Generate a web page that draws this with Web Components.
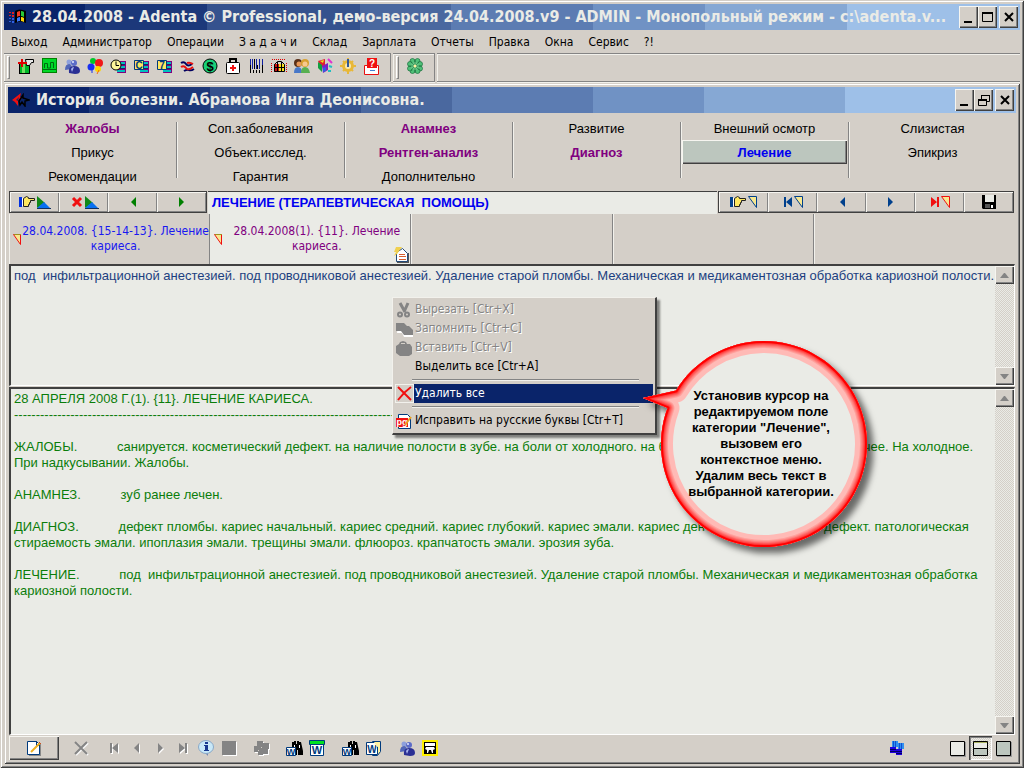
<!DOCTYPE html>
<html lang="ru">
<head>
<meta charset="utf-8">
<meta name="viewport" content="width=device-width, initial-scale=1">
<title>Adenta Professional</title>
<style>
  :root {
    --face: #d4cfc8;
    --light: #f2f1ec;
    --shade: #848484;
    --dark: #404040;
    --field: #eaebe6;
    --ui: "DejaVu Sans Condensed", "Noto Sans", sans-serif;
    --text: "Liberation Sans", Arial, sans-serif;
  }
  html, body { margin: 0; height: 100%; background: var(--face); }
  body { font: 12px/16px var(--ui); color: #000; }
</style>
</head>
<body>

<app-window class="main" caption="28.04.2008 - Adenta © Professional, демо-версия 24.04.2008.v9 - ADMIN - Монопольный режим - c:\adenta.v..." icon="winflag" middle="max">
  <menu-bar items="Выход|Администратор|Операции|З а д а ч и|Склад|Зарплата|Отчеты|Правка|Окна|Сервис|?!"></menu-bar>
  <tool-bar></tool-bar>
  <app-window class="child" caption="История болезни. Абрамова Инга Деонисовна." icon="arrows" middle="restore">
    <category-grid></category-grid>
    <record-nav>ЛЕЧЕНИЕ (ТЕРАПЕВТИЧЕСКАЯ&nbsp; ПОМОЩЬ)</record-nav>
    <visit-tabs></visit-tabs>
    <memo-field class="editor"><textarea aria-label="Лечение" spellcheck="false">под  инфильтрационной анестезией. под проводниковой анестезией. Удаление старой пломбы. Механическая и медикаментозная обработка кариозной полости.</textarea></memo-field>
    <memo-field class="report"><textarea aria-label="История болезни" spellcheck="false" readonly>28 АПРЕЛЯ 2008 Г.(1). {11}. ЛЕЧЕНИЕ КАРИЕСА.
------------------------------------------------------------------------------------------------------------------------

ЖАЛОБЫ.           санируется. косметический дефект. на наличие полости в зубе. на боли от холодного. на боли от сладкого. кислое. На горячее. На холодное. При надкусывании. Жалобы.

АНАМНЕЗ.           зуб ранее лечен.

ДИАГНОЗ.           дефект пломбы. кариес начальный. кариес средний. кариес глубокий. кариес эмали. кариес дентина. клиновидный дефект. патологическая стираемость эмали. ипоплазия эмали. трещины эмали. флюороз. крапчатость эмали. эрозия зуба.

ЛЕЧЕНИЕ.           под  инфильтрационной анестезией. под проводниковой анестезией. Удаление старой пломбы. Механическая и медикаментозная обработка кариозной полости.</textarea></memo-field>
    <bottom-bar></bottom-bar>
  </app-window>
</app-window>

<context-menu></context-menu>
<hint-callout>Установив курсор на<br>редактируемом поле<br>категории "Лечение",<br>вызовем его<br>контекстное меню.<br>Удалим весь текст в<br>выбранной категории.</hint-callout>

<script>
/**
 * Icons: [width, height, svg body]
 */
const HAND = (x, cuff) => `<path fill="${cuff}" d="M${x} 3h3v10h-3z"/><path fill="#fff" d="M${x + 3} 4h1v8h-1z"/>
  <path fill="#ffe860" stroke="#222" d="M${x + 4}.5 4.500l3-2 2 1v1h6v2h-4v2h-1v2h-1v2h-5z"/>`;
const PEOPLE = `<circle cx="5" cy="4" r="2.500" fill="#8ea0dc"/><path fill="#5266b8" d="M1 12q0-6 4-6 3 0 3 5z"/>
  <circle cx="10" cy="5" r="3" fill="#5c6cc8"/><circle cx="9" cy="4" r="1" fill="#e4e9ff"/><path fill="#2a2f94" d="M5 15q-1-7 5-7 6 0 6 5 0 3-5 3z"/><path fill="#a9b5ee" d="M7 11q1-2 3-2l-2 5z"/>`;
const BOOKS = `<path fill="#800080" d="M9 3h7v12H7z"/><path stroke="#00c0c0" stroke-width="2" d="M9 5h6M9 9h6M7 13h8"/><path stroke="#202060" d="M9 6.500h6M9 10.500h6"/>`;
const SLOPE = x => `<path fill="#108818" d="M${x} 2v12l8-5z"/><path fill="#0870f0" d="M${x} 14h13l-6-6z"/><path stroke="#103060" d="M${x} 14.500h14"/>`;
const TIP = (x, line) => `<path fill="#f8e890" stroke="${line}" d="M${x}.5 2.500h8v11z"/>`;
const BINO = `<path fill="#000" d="M6 2h2v-1h2v3h1v-3h2v1h2l2 9v4h-5v-5h-1v5H6V8z"/><path stroke="#fff" d="M8.500 5v3M13.500 5v3"/>`;
const WORD = (x, y) => `<path fill="#fff" stroke="#003a7c" d="M${x}.5 ${y}.5h9v8h-9z"/><text x="${x + 5}" y="${y + 8}" text-anchor="middle" font-size="9" font-weight="700" fill="#003a7c">W</text>`;

const ICONS = {
  winflag: [18, 16, `<path fill="#000" d="M7 2q4-3 11 0v12q-5-3-11 0z"/><path fill="#f03a24" d="M9 3q2-1 3-1v5q-2 0-3 1z"/><path fill="#28c838" d="M13 2q2 0 3 1v5q-2-1-3-1z"/><path fill="#3878ff" d="M9 9q2-1 3-1v4q-2 0-3 1z"/><path fill="#ffd800" d="M13 8q2 0 3 1v4q-2-1-3-1z"/><path fill="#e02020" d="M1 3h2v1H1zM4 3h2v2H4zM1 6h2v1H1zM4 6h2v2H4z"/><path fill="#3060e0" d="M1 9h2v1H1zM4 9h2v2H4zM1 12h2v1H1zM4 12h2v2H4z"/>`],
  arrows: [18, 14, `<path fill="#f01010" d="M0 7l9-7-1 4h3l-5 4v5l-3-4z"/><path fill="#10306c" d="M4 7l3-3-1 4z"/><path fill="none" stroke="#000" stroke-width="1.500" d="M7 8l4-6v3l6 2-4 1v5l-3-4-2 3z"/>`],
  min: [12, 12, `<path fill="#000" d="M1 10h8v2H1z"/>`],
  max: [12, 12, `<path fill="none" stroke="#000" d="M.5 1.500h10v9H.5z"/><path fill="#000" d="M0 1h11v2H0z"/>`],
  restore: [12, 12, `<path fill="none" stroke="#000" d="M3.500 5V1.500h8v6H9"/><path fill="#000" d="M3 1h9v1H3z"/><path fill="none" stroke="#000" d="M.5 5.500h8v6h-8z"/><path fill="#000" d="M0 5h9v2H0z"/>`],
  close: [12, 12, `<path stroke="#000" stroke-width="2" d="M2 2l8 8M10 2l-8 8"/>`],

  exit: [16, 16, `<path fill="#000" d="M1 5h11v11H1z"/><path fill="#00b828" d="M2 6h9v9H2z"/><path fill="#70e060" d="M4 6h3v9H4z"/><path fill="#e8e8e8" stroke="#000" d="M7.500 1.500h8v3h-2l-2 3h-3z"/><path stroke="#e00000" stroke-width="2" d="M0 5h9M4 1v8"/>`],
  chart: [16, 16, `<path fill="#008000" d="M1 0h15v15H1z"/><path fill="#00d828" d="M2 1h13v13H2z"/><path fill="none" stroke="#006a10" d="M3.500 10V5.500h3V10h3V4.500h3V10M2 11.500h13"/>`],
  people: [16, 16, PEOPLE],
  balls: [16, 16, `<circle cx="6" cy="3" r="3" fill="#00c828"/><circle cx="12" cy="5" r="4" fill="#f01818"/><circle cx="4" cy="9" r="3.500" fill="#1830f0"/><circle cx="11" cy="11" r="3" fill="#ffd800"/><path stroke="#f06010" d="M12 12l-2 4"/><path stroke="#1830f0" d="M5 11v4"/>`],
  clock: [16, 16, BOOKS + `<circle cx="6" cy="7" r="5" fill="#fff59a" stroke="#000"/><path fill="none" stroke="#000" d="M6 3.500v4h3"/>`],
  phone: [16, 16, BOOKS + `<path fill="#ffe860" stroke="#003a7c" d="M1.500 2.500h9v9h-9z"/><text x="6" y="11" text-anchor="middle" font-size="10" font-weight="700" fill="#003a7c">C</text>`],
  seven: [16, 16, BOOKS + `<path fill="#ffe860" stroke="#003a7c" d="M1.500 2.500h9v9h-9z"/><text x="6" y="11" text-anchor="middle" font-size="10" font-weight="700" fill="#003a7c">7</text>`],
  waves: [16, 16, `<path fill="none" stroke="#000060" stroke-width="2" d="M2 5q3-2 5 1t6 0M5 13q3-2 5-1t5-1"/><path fill="none" stroke="#e81010" stroke-width="2" d="M2 9q3-2 5 1t7-1M8 5q3-1 6 1"/>`],
  dollar: [16, 16, `<circle cx="8" cy="8" r="7" fill="#18d078" stroke="#000"/><text x="8" y="13" text-anchor="middle" font-size="13" font-weight="700">$</text>`],
  medkit: [16, 16, `<path fill="none" stroke="#000" stroke-width="2" d="M5 4V1h6v3"/><rect x="1.500" y="4.500" width="13" height="11" rx="1" fill="#fff" stroke="#000"/><path stroke="#f01010" stroke-width="2" d="M8 7v6M5 10h6"/>`],
  barcode: [16, 16, `<path stroke="#1020a0" d="M2.500 1v10M4.500 1v10M8.500 1v10M11.500 1v10M14.500 1v10"/><path stroke="#000" d="M2.500 7v8M6.500 1v10M9.500 7v4M14.500 7v8M5.500 12v3M8.500 12v3M11.500 12v3"/>`],
  basket: [16, 16, `<path fill="none" stroke="#e00000" stroke-dasharray="1 1" d="M1 1.500h14M.5 5v10M15.500 5v10"/><path fill="#c81010" d="M3 6h5v8H3z"/><path fill="#f8e020" d="M8 6h5v8H8z"/><path fill="none" stroke="#000" d="M3.500 13.500v-7l3-3h4l3 3v7zM3 9.500h10M6.500 4v9M10.500 4v9"/>`],
  pair: [17, 16, `<circle cx="5" cy="5" r="4" fill="#5a3018"/><circle cx="6" cy="6" r="2.500" fill="#e89858"/><path fill="#4878c8" d="M1 15q0-6 4-6t4 6z"/><circle cx="12" cy="5" r="4" fill="#d8a030"/><circle cx="12" cy="6" r="2.500" fill="#f8c890"/><path fill="#58b050" d="M8 15q0-6 4-6t5 6z"/>`],
  cubes: [16, 16, `<path fill="#e02030" d="M1 3l7-2v6l-4 3z"/><path fill="#10a040" d="M1 4l4 3v7l-4-4z"/><path fill="#8020c0" d="M5 8l6-3v7l-5 3z"/><path fill="#e8e020" d="M3 3l4-1-1 3z"/><path fill="#3060e0" d="M6 10l3-1v4l-3 1z"/><path stroke="#e030d0" stroke-width="2" d="M11 1l4 4"/><path stroke="#20c0c0" stroke-width="2" d="M12 8l3 1M11 13h3"/>`],
  gear: [16, 16, `<circle cx="8" cy="8" r="4.500" fill="none" stroke="#e8b838" stroke-width="3"/><path stroke="#e8b838" stroke-width="2" d="M8 0v16M0 8h16M3 3l10 10M13 3L3 13"/><circle cx="8" cy="8" r="3" fill="#f8e8b0"/><path stroke="#305898" stroke-width="2" d="M8 1v8"/>`],
  help: [16, 17, `<path fill="#fff" stroke="#e81010" d="M1.500 7.500h14v9h-14z"/><path fill="#f01010" d="M4 0h10v10H4z"/><text x="9" y="9" text-anchor="middle" font-size="10" font-weight="700" fill="#fff">?</text><path stroke="#4080d0" d="M7 12.500h5"/>`],
  clover: [16, 16, `<g fill="#50c078" stroke="#18703c" stroke-width=".7"><circle cx="5.500" cy="3" r="2.500"/><circle cx="10.500" cy="3" r="2.500"/><circle cx="13" cy="6" r="2.500"/><circle cx="13" cy="10.500" r="2.500"/><circle cx="10.500" cy="13" r="2.500"/><circle cx="5.500" cy="13" r="2.500"/><circle cx="3" cy="10.500" r="2.500"/><circle cx="3" cy="6" r="2.500"/></g><circle cx="8" cy="8" r="4" fill="#68c888"/><path stroke="#18703c" stroke-width=".6" d="M8 2v12M2 8h12M4 4l8 8M12 4l-8 8"/><circle cx="8" cy="8" r="1.500" fill="#fff0a0"/>`],

  handAdd: [34, 16, HAND(1, '#0030e0') + SLOPE(19)],
  delAdd: [32, 16, `<path stroke="#f01010" stroke-width="3" d="M5 4l8 8M13 4l-8 8"/>` + SLOPE(17)],
  prevG: [8, 12, `<path fill="#008000" d="M7 1v10L2 6z"/>`],
  nextG: [8, 12, `<path fill="#008000" d="M1 1v10l5-5z"/>`],
  prevB: [8, 12, `<path fill="#00408c" d="M7 1v10L2 6z"/>`],
  nextB: [8, 12, `<path fill="#00408c" d="M1 1v10l5-5z"/>`],
  handTip: [28, 16, HAND(0, '#00408c') + TIP(18, '#00408c')],
  firstTip: [20, 16, `<path fill="#00408c" d="M1 3h2v10H1zM9 3v10L3 8z"/>` + TIP(11, '#00408c')],
  lastTip: [20, 16, `<path fill="#f01010" d="M7 3h2v10H7zM1 3v10l6-5z"/>` + TIP(11, '#f01010')],
  save: [16, 16, `<path fill="#000" d="M1 1h14v14H2l-1-1z"/><path fill="#eaebe6" d="M4 1h9v7H4z"/><path fill="#fff" d="M10 11h2v3h-2z"/><path fill="#555" d="M4 10h5v4H4z"/>`],
  tip: [9, 13, `<path fill="#f8e890" stroke="#f01010" d="M.5 1.500h7v10z"/><path stroke="#a09020" d="M1 1.500h7"/>`],
  note: [16, 17, `<path fill="#555" d="M4 7h12v10H4z"/><path fill="#fff" stroke="#234a78" d="M3.500 6.500l6-4 5 5v8h-11z"/><path stroke="#d86030" d="M6 8.500h6M6 10.500h7M6 13.500h7"/><path fill="#f0d050" d="M3 1h6L4 8l-3 2 2-4H1z"/>`],

  cut: [16, 16, `<path stroke="#848484" stroke-width="3" fill="none" d="M4 1l5 9M12 1l-4 9"/><circle cx="4" cy="12.500" r="2" fill="none" stroke="#848484" stroke-width="2"/><circle cx="11" cy="12.500" r="2" fill="none" stroke="#848484" stroke-width="2"/>`],
  copy: [17, 16, `<path fill="#fff" d="M2 4h7l3 3h2l4 4v5H8L6 12H1z"/><path fill="#848484" d="M0 2h8l3 3h2l4 4v5H8l-3-4H0z"/>`],
  paste: [17, 16, `<path fill="#848484" d="M0 6l3-2 1-2 3-1 3 1 1 2h3l2 3v7l-3 2H4l-4-3z"/><path stroke="#d4cfc8" d="M5 3.500h4"/>`],
  del: [17, 17, `<path stroke="#f01010" stroke-width="2" fill="none" d="M2 2q6 6 13 13M15 2Q8 7 2 15"/>`],
  pg: [16, 16, `<path fill="#fff" stroke="#003a7c" d="M2.500 1.500h9l3 3v11h-12z"/><path fill="#f01010" d="M0 5h12v9H0z"/><text x="6" y="12" text-anchor="middle" font-size="9" font-weight="700" fill="#fff">pg</text><path stroke="#e8a020" stroke-width="2" d="M9 12l6-8"/>`],

  edit: [16, 16, `<path fill="#888" d="M3 3h12v13H3z"/><path fill="#fff" stroke="#003a7c" d="M1.500 1.500h9l3 3v10h-12z"/><path fill="#003a7c" d="M10 1h1v4h3v1H10z"/><path stroke="#f0b020" stroke-width="2" d="M5 12l9-9"/><path stroke="#d05020" d="M13 2l2 2"/>`],
  delGray: [16, 16, `<path stroke="#f8f8f8" stroke-width="2" d="M3 3l12 12M15 3L3 15"/><path stroke="#848484" stroke-width="2" d="M2 2l12 12M14 2L2 14"/>`],
  first: [12, 12, `<path fill="#fff" d="M3 2h2v10H3zM11 2v10L5 7z"/><path fill="#848484" d="M2 1h2v10H2zM10 1v10L4 6z"/>`],
  prev: [12, 12, `<path fill="#fff" d="M9 2v10L4 7z"/><path fill="#848484" d="M8 1v10L3 6z"/>`],
  next: [12, 12, `<path fill="#fff" d="M5 2v10l5-5z"/><path fill="#848484" d="M4 1v10l5-5z"/>`],
  last: [12, 12, `<path fill="#fff" d="M9 2h2v10H9zM3 2v10l6-5z"/><path fill="#848484" d="M8 1h2v10H8zM2 1v10l6-5z"/>`],
  info: [18, 16, `<path fill="#7888b0" d="M8 13l3 3v-4z"/><ellipse cx="9" cy="7" rx="7.500" ry="6.500" fill="#c8e8f8" stroke="#88a8c8"/><path fill="#183890" d="M8 2h3v2H8zM7 5h4v5h1v1H7v-1h1V6H7z"/>`],
  stop: [16, 16, `<path fill="#fff" d="M2 2h14v14H2z"/><path fill="#848484" d="M1 1h14v14H1z"/>`],
  puzzle: [17, 16, `<path fill="#fff" d="M5 2h6v2h6v6h-1v5h-5v1H6v-3H2V7h3z"/><path fill="#848484" d="M4 1h6v2h6v6h-1v5h-5v1H5v-3H1V6h3z"/><path stroke="#d4cfc8" d="M8 7.500h1M5 10.500h1"/>`],
  findW: [18, 17, BINO + WORD(0, 7)],
  wordG: [17, 17, `<path fill="#fff" stroke="#003a7c" d="M1.500 2.500h13v13h-13z"/><text x="8" y="14" text-anchor="middle" font-size="11" font-weight="700" fill="#003a7c">W</text><path fill="#00e020" stroke="#003a7c" d="M.5 .5h15v4H.5z"/>`],
  wordY: [17, 17, `<path fill="#fff0a0" stroke="#003a7c" d="M7.500 1.500h8v10l-3 4h-5z"/><path fill="#fff" stroke="#003a7c" d="M1.500 2.500h11v12h-11z"/><text x="7" y="13" text-anchor="middle" font-size="10" font-weight="700" fill="#003a7c">W</text><path fill="#fff0a0" d="M9 2h6v4l-3 1z"/>`],
  tooth: [16, 16, `<path fill="#000" stroke="#fff000" stroke-width="2" d="M1 1h14v14H1z"/><path fill="#fff" d="M3 3h10v3H3zM4 7h8l1 2-2 1v3h-1l-1-3H7l-1 3H5v-3L3 9z"/>`],
  blocks: [16, 16, `<path fill="#3090f0" d="M3 1h6v6H3zM9 3h6v6H9z"/><path stroke="#1050d0" d="M4.500 1v6M6.500 1v6M10.500 3v6M12.500 3v6"/><path fill="#2000e0" d="M1 7h6v6H1zM7 9h6v6H7z"/><path stroke="#000060" d="M1 9.500h6M1 11.500h6M7 11.500h6M7 13.500h6"/>`],
  viewTop: [17, 17, `<path fill="#999" d="M2 2h15v15H2z"/><path fill="#eaebe6" stroke="#000" d="M1.500 1.500h14v14h-14z"/>`],
  viewSplit: [17, 17, `<path fill="#eaebe6" stroke="#000" d="M1.500 1.500h14v7h-14z"/><path fill="#bcc6be" stroke="#000" d="M1.500 8.500h14v7h-14z"/><path stroke="#a8b060" d="M2 2.500h13"/>`],
  viewBottom: [17, 17, `<path fill="#999" d="M2 2h15v15H2z"/><path fill="#bcc6be" stroke="#000" d="M1.500 1.500h14v14h-14z"/>`],
};

const BUTTON_CSS = `
  button { margin: 0; padding: 0; border: 0; background: none; color: inherit; font: inherit; display: flex; align-items: center; justify-content: center; }
`;
const RAISED = `box-shadow: inset 1px 1px #f6f5f0, inset -1px -1px #404040, inset -2px -2px #848484;`;

class PxIcon extends HTMLElement {
  constructor() {
    super();
    this.attachShadow({ mode: 'open' });
  }

  connectedCallback() {
    const [w, h, body] = ICONS[this.getAttribute('name')];
    this.shadowRoot.innerHTML = `
      <style>
        :host { display: block; flex: none; }
        svg { display: block; font-family: var(--text); }
      </style>
      <svg width="${w}" height="${h}" viewBox="0 0 ${w} ${h}" fill="#000" aria-hidden="true">${body}</svg>
    `;
  }
}
customElements.define('px-icon', PxIcon);

/** Window frame with a stepped gradient caption */
class AppWindow extends HTMLElement {
  constructor() {
    super();
    this.attachShadow({ mode: 'open' });
  }

  connectedCallback() {
    this.shadowRoot.innerHTML = `
      <style>
        ${BUTTON_CSS}
        :host {
          display: flex; flex-direction: column; box-sizing: border-box; padding: 4px; min-width: 0;
          background: var(--face);
          box-shadow: inset 1px 1px var(--face), inset -1px -1px var(--dark), inset 2px 2px #fff, inset -2px -2px var(--shade);
        }
        :host(.main) { min-height: 100vh; }
        :host(.child) { flex: 1; }
        header {
          display: flex; align-items: center; gap: 6px; height: 26px; padding: 0 2px 0 4px; color: var(--field);
          background: linear-gradient(90deg, #0a246a 8%, #1c387a 8% 20%, #35528e 20% 35%, #4a689f 35% 44%, #5c7cb2 44% 58%, #7092c4 58% 69%, #86a8d4 69% 83%, #9ec0e8 83%);
        }
        h1 { flex: 1; margin: 0; font: bold 16px/22px var(--ui); white-space: nowrap; overflow: hidden; }
        .buttons { display: flex; }
        .buttons button { width: 19px; height: 22px; background: var(--face); ${RAISED} }
        .buttons button:last-child { margin-left: 2px; }
      </style>
      <header>
        <px-icon name="${this.getAttribute('icon')}"></px-icon>
        <h1>${this.getAttribute('caption')}</h1>
        <div class="buttons">
          <button aria-label="Свернуть"><px-icon name="min"></px-icon></button>
          <button aria-label="Развернуть"><px-icon name="${this.getAttribute('middle')}"></px-icon></button>
          <button aria-label="Закрыть"><px-icon name="close"></px-icon></button>
        </div>
      </header>
      <slot></slot>
    `;
  }
}
customElements.define('app-window', AppWindow);

class MenuBar extends HTMLElement {
  constructor() {
    super();
    this.attachShadow({ mode: 'open' });
  }

  connectedCallback() {
    const items = this.getAttribute('items').split('|');
    this.shadowRoot.innerHTML = `
      <style>
        ${BUTTON_CSS}
        :host { display: block; }
        nav { display: flex; gap: 1px; height: 23px; }
        button { padding: 0 7px; white-space: pre; }
      </style>
      <nav>${items.map(t => `<button>${t}</button>`).join('')}</nav>
    `;
  }
}
customElements.define('menu-bar', MenuBar);

class ToolBar extends HTMLElement {
  constructor() {
    super();
    this.attachShadow({ mode: 'open' });
  }

  connectedCallback() {
    const band = names => `
      <div class="band"><i></i>${names.map(n => `<button aria-label="${n}"><px-icon name="${n}"></px-icon></button>`).join('')}</div>`;
    this.shadowRoot.innerHTML = `
      <style>
        ${BUTTON_CSS}
        :host { display: flex; height: 30px; gap: 2px; }
        .band {
          display: flex; align-items: center; box-sizing: border-box; padding: 0 8px 0 3px;
          border: solid var(--shade); border-width: 1px 1px 1px 0;
          box-shadow: inset 1px 1px var(--light), 0 1px var(--light);
          height: 29px;
        }
        .rest { flex: 1; border-right: 0; }
        i { width: 1px; height: 21px; margin-right: 4px; border: 1px solid; border-color: #fff var(--shade) var(--shade) #fff; }
        button { width: 23px; height: 25px; align-items: start; padding-top: 3px; }
      </style>
      ${band(['exit', 'chart', 'people', 'balls', 'clock', 'phone', 'seven', 'waves', 'dollar', 'medkit', 'barcode', 'basket', 'pair', 'cubes', 'gear', 'help'])}
      ${band(['clover'])}
      <div class="band rest"></div>
    `;
  }
}
customElements.define('tool-bar', ToolBar);

/** Sections of the record, read column by column */
class CategoryGrid extends HTMLElement {
  constructor() {
    super();
    this.attachShadow({ mode: 'open' });
  }

  connectedCallback() {
    const columns = [
      ['*Жалобы', 'Прикус', 'Рекомендации'],
      ['Соп.заболевания', 'Объект.исслед.', 'Гарантия'],
      ['*Анамнез', '*Рентген-анализ', 'Дополнительно'],
      ['Развитие', '*Диагноз'],
      ['Внешний осмотр', '!Лечение'],
      ['Слизистая', 'Эпикриз'],
    ];
    const cls = { '*': 'filled', '!': 'current' };
    const cell = t => `<button class="${cls[t[0]] || ''}">${t.replace(/^[*!]/, '')}</button>`;
    this.shadowRoot.innerHTML = `
      <style>
        ${BUTTON_CSS}
        :host { display: grid; grid-template-columns: repeat(6, 1fr); padding: 3px 0; font: 13px/16px var(--text); }
        .col { position: relative; height: 72px; padding: 0 1px 0 2px; }
        .col + .col::before {
          content: ""; position: absolute; left: 0; top: 6px; bottom: 10px; width: 1px;
          background: var(--shade); box-shadow: 1px 0 var(--light);
        }
        button { width: 100%; height: 24px; padding-top: 1px; }
        .filled { color: #800080; font-weight: bold; }
        .current { position: relative; background: #bcc6be; color: #0000f0; font-weight: bold; ${RAISED} }
      </style>
      ${columns.map(c => `<div class="col">${c.map(cell).join('')}</div>`).join('')}
    `;
  }
}
customElements.define('category-grid', CategoryGrid);

class RecordNav extends HTMLElement {
  constructor() {
    super();
    this.attachShadow({ mode: 'open' });
  }

  connectedCallback() {
    const group = names => `
      <div class="group">${names.map(n => `<button aria-label="${n}"><px-icon name="${n}"></px-icon></button>`).join('')}</div>`;
    this.shadowRoot.innerHTML = `
      <style>
        ${BUTTON_CSS}
        :host { display: flex; gap: 1px; height: 23px; margin: 0 2px 0 1px; }
        .group { display: flex; box-sizing: border-box; border: 1px solid var(--dark); height: 22px; }
        button { width: 49px; box-shadow: inset 1px 1px #f6f5f0, inset -1px -1px #848484; }
        h2 {
          flex: 1; box-sizing: border-box; margin: 0; padding: 3px 4px 0; background: var(--field); border-top: 1px solid var(--dark);
          font: bold 13px/16px var(--text); color: #0000f0; white-space: nowrap; overflow: hidden;
        }
      </style>
      ${group(['handAdd', 'delAdd', 'prevG', 'nextG'])}
      <h2><slot></slot></h2>
      ${group(['handTip', 'firstTip', 'prevB', 'nextB', 'lastTip', 'save'])}
    `;
  }
}
customElements.define('record-nav', RecordNav);

class VisitTabs extends HTMLElement {
  constructor() {
    super();
    this.attachShadow({ mode: 'open' });
  }

  connectedCallback() {
    this.shadowRoot.innerHTML = `
      <style>
        ${BUTTON_CSS}
        :host { display: grid; grid-template-columns: repeat(5, minmax(0, 1fr)); height: 50px; margin: 0 1px; }
        button, div { border-right: 1px solid var(--shade); box-shadow: inset 1px 0 var(--light); position: relative; }
        div:last-child { border-right: 0; }
        button { padding-left: 4px; color: #1818f0; white-space: nowrap; }
        button:first-child { box-shadow: none; }
        button.on { background: var(--field); color: #800080; box-shadow: none; }
        span { flex: 1; line-height: 15px; }
        .note { position: absolute; right: 1px; bottom: 1px; }
      </style>
      <button><px-icon name="tip"></px-icon><span>28.04.2008. {15-14-13}. Лечение<br>кариеса.</span></button>
      <button class="on"><px-icon name="tip"></px-icon><span>28.04.2008(1). {11}. Лечение<br>кариеса.</span><px-icon class="note" name="note"></px-icon></button>
      <div></div><div></div><div></div>
    `;
  }
}
customElements.define('visit-tabs', VisitTabs);

/** Text area with a classic scroll bar */
class MemoField extends HTMLElement {
  constructor() {
    super();
    this.attachShadow({ mode: 'open' });
  }

  connectedCallback() {
    this.shadowRoot.innerHTML = `
      <style>
        ${BUTTON_CSS}
        :host {
          display: flex; box-sizing: border-box; margin: 0 1px; background: var(--field);
          border: solid; border-width: 2px 1px 1px 2px; border-color: var(--dark) #fff #fff var(--dark);
        }
        :host(.editor) { height: 122px; color: #1c3f80; }
        :host(.report) { flex: 1; margin-top: 1px; color: #0a7d0a; }
        ::slotted(textarea) {
          flex: 1; min-width: 0; box-sizing: border-box; margin: 0; padding: 2px 0 0 3px; border: 0; outline: 0; resize: none; overflow: hidden;
          background: none; color: inherit; font: 13px/16px var(--text);
        }
        .bar {
          width: 19px; display: flex; flex-direction: column; justify-content: space-between;
          background: repeating-conic-gradient(#eaebe6 0 25%, #d4cfc8 0 50%) 0 0 / 2px 2px;
        }
        .bar button { height: 18px; background: var(--face); ${RAISED} }
      </style>
      <slot></slot>
      <div class="bar">
        <button aria-label="Вверх"><svg width="9" height="5" viewBox="0 0 9 5"><path fill="#848484" d="M4 0h1l4 5H0z"/></svg></button>
        <button aria-label="Вниз"><svg width="9" height="5" viewBox="0 0 9 5"><path fill="#848484" d="M0 0h9L5 5H4z"/></svg></button>
      </div>
    `;
  }
}
customElements.define('memo-field', MemoField);

class BottomBar extends HTMLElement {
  constructor() {
    super();
    this.attachShadow({ mode: 'open' });
  }

  connectedCallback() {
    const group = (names, on) => `
      <div>${names.map(n => `<button class="${n === on ? 'on' : ''}" aria-label="${n}"><px-icon name="${n}"></px-icon></button>`).join('')}</div>`;
    this.shadowRoot.innerHTML = `
      <style>
        ${BUTTON_CSS}
        :host { display: flex; gap: 10px; padding: 1px 1px 0; height: 24px; }
        div { display: flex; }
        button { width: 23px; height: 24px; }
        .edit { width: 50px; ${RAISED} }
        .right { margin-left: auto; gap: 38px; }
        .on {
          background: repeating-conic-gradient(#eaebe6 0 25%, #d4cfc8 0 50%) 0 0 / 2px 2px;
          box-shadow: inset 1px 1px #404040, inset 2px 2px #848484, inset -1px -1px #fff;
        }
      </style>
      <button class="edit" aria-label="edit"><px-icon name="edit"></px-icon></button>
      ${group(['delGray'])}
      ${group(['first', 'prev', 'next', 'last', 'info', 'stop'])}
      ${group(['puzzle'])}
      ${group(['findW', 'wordG'])}
      ${group(['findW', 'wordY'])}
      ${group(['people', 'tooth'])}
      <div class="right">
        ${group(['blocks'])}
        ${group(['viewTop', 'viewSplit', 'viewBottom'], 'viewSplit')}
      </div>
    `;
  }
}
customElements.define('bottom-bar', BottomBar);

class ContextMenu extends HTMLElement {
  constructor() {
    super();
    this.attachShadow({ mode: 'open' });
  }

  connectedCallback() {
    const items = [
      { icon: 'cut', text: 'Вырезать [Ctr+X]', state: 'disabled' },
      { icon: 'copy', text: 'Запомнить [Ctr+C]', state: 'disabled' },
      { icon: 'paste', text: 'Вставить [Ctr+V]', state: 'disabled' },
      { text: 'Выделить все [Ctr+A]' },
      null,
      { icon: 'del', text: 'Удалить все', state: 'class="hot"' },
      null,
      { icon: 'pg', text: 'Исправить на русские буквы [Ctr+T]' },
    ];
    this.shadowRoot.innerHTML = `
      <style>
        ${BUTTON_CSS}
        :host {
          position: absolute; left: 392px; top: 297px; width: 265px; box-sizing: border-box; padding: 2px 2px 3px 3px;
          background: var(--face); border: solid; border-width: 1px 2px 2px 1px; border-color: var(--light) var(--dark) var(--dark) var(--light);
          box-shadow: 3px 3px 2px rgba(0, 0, 0, .45);
        }
        button { display: grid; grid-template-columns: 18px 1fr; width: 100%; height: 19px; text-align: left; justify-items: start; }
        button:disabled { color: #848484; text-shadow: 1px 1px #fff; }
        span { display: block; align-self: stretch; justify-self: stretch; padding-left: 1px; line-height: 19px; white-space: nowrap; }
        .hot px-icon { box-shadow: 0 0 0 1px var(--light); }
        .hot span { background: #0a246a; color: #fff; }
        hr { margin: 3px 14px 3px 16px; border: 0; border-top: 1px solid var(--shade); border-bottom: 1px solid var(--light); }
      </style>
      ${items.map(it => it
        ? `<button ${it.state || ''}>${it.icon ? `<px-icon name="${it.icon}"></px-icon>` : '<i></i>'}<span>${it.text}</span></button>`
        : '<hr>').join('')}
    `;
  }
}
customElements.define('context-menu', ContextMenu);

/** Round hint balloon whose tail points at the active menu item */
class HintCallout extends HTMLElement {
  constructor() {
    super();
    this.attachShadow({ mode: 'open' });
  }

  connectedCallback() {
    const shape = 'M3 60L36 52.500A103 103 0 1 1 27.500 70Z';
    const bands = [[24, '#ffbab6'], [14, '#ffa09c'], [12, '#ff8a86'], [10, '#ff7472'], [8, '#ff5a58'], [6, '#ff3c3c'], [4, '#ff0000']];
    this.shadowRoot.innerHTML = `
      <style>
        :host {
          position: absolute; left: 640px; top: 338px; width: 240px; height: 224px;
          display: flex; justify-content: center; box-sizing: border-box; padding: 50px 0 0 2px;
        }
        svg { position: absolute; left: 0; top: 0; filter: drop-shadow(6px 6px 3px rgba(0, 0, 0, .55)); }
        p { position: relative; margin: 0; font: bold 13px/16px var(--text); text-align: center; white-space: nowrap; }
      </style>
      <svg width="240" height="224" viewBox="0 0 240 224">
        <clipPath id="balloon"><path d="${shape}"/></clipPath>
        <path d="${shape}" fill="#eaebe6"/>
        <g clip-path="url(#balloon)" fill="none" stroke-linejoin="round">
          ${bands.map(([w, c]) => `<path d="${shape}" stroke="${c}" stroke-width="${w}"/>`).join('')}
        </g>
      </svg>
      <p><slot></slot></p>
    `;
  }
}
customElements.define('hint-callout', HintCallout);
</script>
</body>
</html>
